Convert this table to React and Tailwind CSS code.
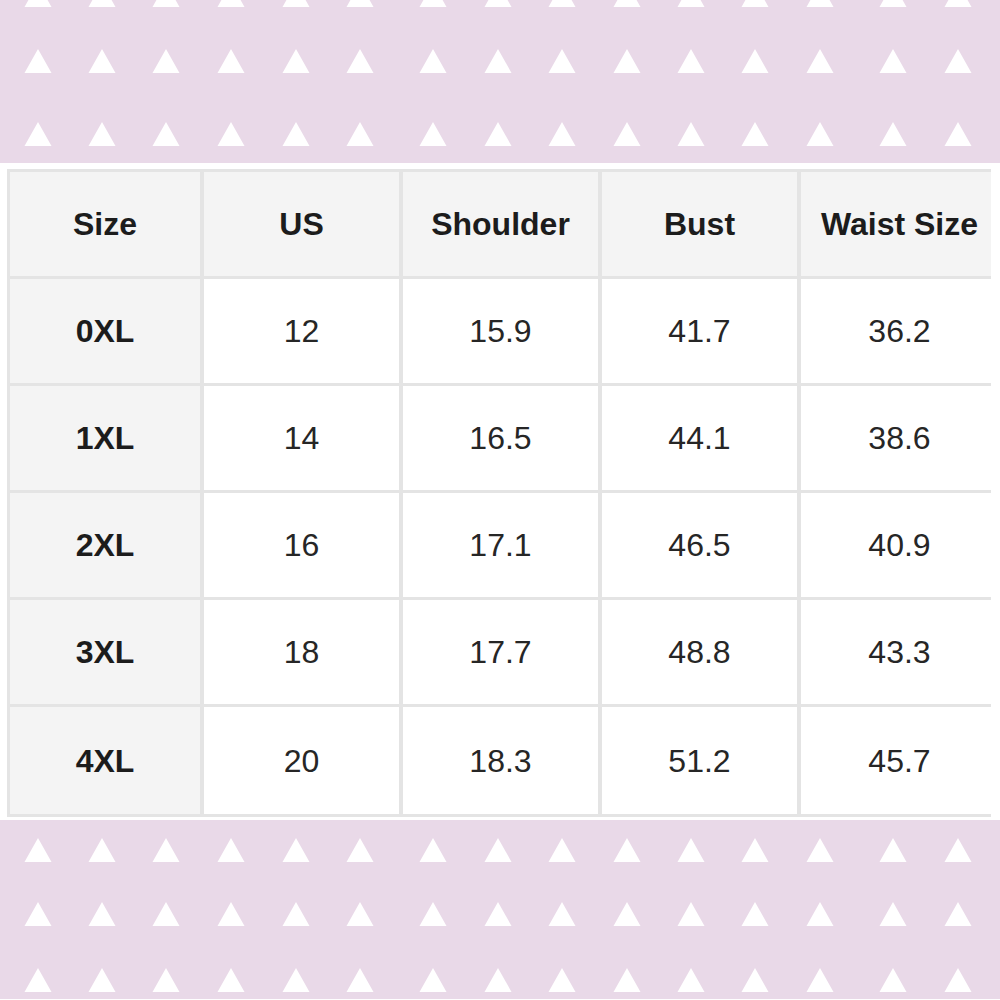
import React from "react";

const triangleXs = [38, 102, 166, 231, 296, 360, 433, 498, 562, 627, 691, 755, 820, 893, 958];

const rows = [
  { size: "0XL", us: "12", shoulder: "15.9", bust: "41.7", waist: "36.2" },
  { size: "1XL", us: "14", shoulder: "16.5", bust: "44.1", waist: "38.6" },
  { size: "2XL", us: "16", shoulder: "17.1", bust: "46.5", waist: "40.9" },
  { size: "3XL", us: "18", shoulder: "17.7", bust: "48.8", waist: "43.3" },
  { size: "4XL", us: "20", shoulder: "18.3", bust: "51.2", waist: "45.7" },
];

function TrianglePattern({ height, rowTops }) {
  return (
    <div className="w-full bg-[#e9d9e8]" style={{ height }}>
      <svg width="1000" height={height} viewBox={`0 0 1000 ${height}`} className="block">
        {rowTops.map((top) =>
          triangleXs.map((x) => (
            <polygon
              key={`${top}-${x}`}
              points={`${x - 13.5},${top + 24} ${x + 13.5},${top + 24} ${x},${top}`}
              fill="#ffffff"
            />
          ))
        )}
      </svg>
    </div>
  );
}

function Cell({ children, head, first, last }) {
  return (
    <div
      className={`flex items-center justify-center ${last ? "h-[107px]" : "h-[104px]"} ${
        head || first ? "bg-[#f4f4f4] font-bold text-[#1c1c1c]" : "bg-white text-[#262626]"
      }`}
    >
      {children}
    </div>
  );
}

export default function App() {
  return (
    <div className="w-[1000px] h-[1000px] bg-white overflow-hidden font-['Liberation_Sans',Arial,sans-serif] text-[32px]">
      <TrianglePattern height={163} rowTops={[-17, 49, 122]} />

      <div className="pt-[6px] pl-[7px]">
        <div className="w-[984px] overflow-hidden">
          <div className="grid w-max grid-cols-[190px_195px_195px_195px_197px] gap-x-[4px] gap-y-[3px] bg-[#e4e4e4] pt-[3px] pb-[3px] pl-[3px]">
            <Cell head>Size</Cell>
            <Cell head>US</Cell>
            <Cell head>Shoulder</Cell>
            <Cell head>Bust</Cell>
            <Cell head>Waist Size</Cell>
            {rows.map((r, i) => {
              const last = i === rows.length - 1;
              return (
                <React.Fragment key={r.size}>
                  <Cell first last={last}>{r.size}</Cell>
                  <Cell last={last}>{r.us}</Cell>
                  <Cell last={last}>{r.shoulder}</Cell>
                  <Cell last={last}>{r.bust}</Cell>
                  <Cell last={last}>{r.waist}</Cell>
                </React.Fragment>
              );
            })}
          </div>
        </div>
      </div>

      <div className="h-[3px]" />
      <TrianglePattern height={179} rowTops={[18, 82, 148]} />
    </div>
  );
}
